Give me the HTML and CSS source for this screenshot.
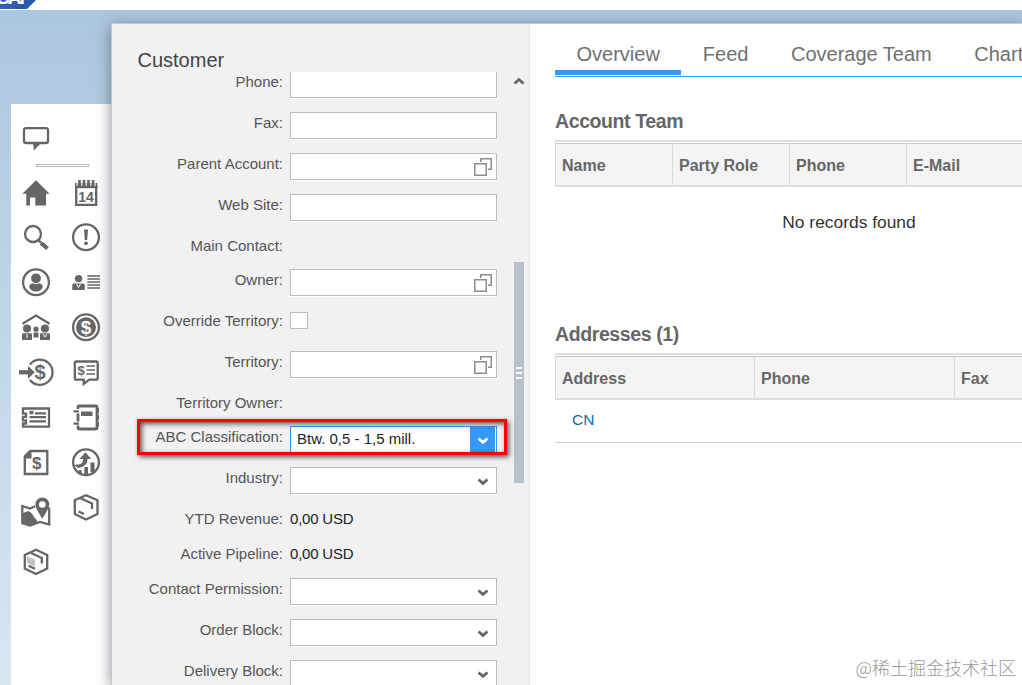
FILE: index.html
```html
<!DOCTYPE html>
<html lang="en">
<head>
    <meta charset="UTF-8" />
    <meta name="viewport" content="width=device-width, initial-scale=1.0" />
    <title>Customer</title>
    <link rel="stylesheet" href="styles.css">
</head>
<body>
    <header class="topbar"><div class="logo"><span>SAP</span></div></header>

    <div class="stage">
        <nav class="rail">
            <div class="rail-top">
                <svg class="icon" viewBox="0 0 40 40"><path class="line" d="M10 10.2H30Q32 10.2 32 12V23Q32 25 30 25H10Q8 25 8 23V12Q8 10.2 10 10.2Z"/><path d="M17 25h8l-7 7.5z"/></svg>
            </div>
            <div class="rail-divider"></div>
            <div class="rail-columns">
                <div class="rail-column">
                    <!-- home -->
                    <svg class="icon" viewBox="0 0 40 40"><path d="M20 7.3L33.7 20.8H30V32.5H19.3V24.5H14V32.5H10.3V20.8H6.3Z"/></svg>
                    <!-- search -->
                    <svg class="icon" viewBox="0 0 40 40"><circle class="line" cx="17" cy="16" r="8"/><path class="line" d="M22 22l3 2.5"/><path class="line thick" d="M25 25l6.5 5.5"/></svg>
                    <!-- user -->
                    <svg class="icon" viewBox="0 0 40 40"><circle class="line" cx="20" cy="19.3" r="12.9"/><circle cx="20" cy="15.3" r="4.9"/><path d="M13.2 24.2Q13.2 20.7 17 20.3Q20 22 23 20.3Q26.8 20.7 26.8 24.2Q25 28.4 20 28.4Q15 28.4 13.2 24.2Z"/></svg>
                    <!-- household -->
                    <svg class="icon" viewBox="0 0 40 40"><path class="line" d="M6.5 15.7L20 7.5L33.5 15.7"/><circle cx="11" cy="20.5" r="4"/><circle cx="29" cy="20.5" r="4"/><circle cx="20" cy="21.2" r="2.6"/><path d="M6 32V26.5Q6 25.2 7.5 25.2H14.5Q16 25.2 16 26.5V32ZM24 32V26.5Q24 25.2 25.5 25.2H32.5Q34 25.2 34 26.5V32ZM17.5 29.5V24.5H22.5V29.5Z"/><path class="cut" d="M11 26v4M27.2 26l1.8 3 1.8-3"/></svg>
                    <!-- sales -->
                    <svg class="icon" viewBox="0 0 40 40"><path class="line" d="M14 11.5A12.6 12.6 0 1 1 14 27"/><path class="line thick" d="M3 19.3h10"/><path d="M12 13l6.8 6.3L12 25.7z"/><text class="glyph" x="24" y="26.2" font-size="20">$</text></svg>
                    <!-- tickets -->
                    <svg class="icon" viewBox="0 0 40 40"><path class="line" d="M7 10.5H33V28.7H7V25.5h3v-3.2H7v-3.5h3v-3.2H7Z"/><path d="M13.5 12.8h4v3.5h-4z"/><path class="line" d="M19 15.3h11M13.5 19.2H30M13.5 23.4H30"/></svg>
                    <!-- quote -->
                    <svg class="icon" viewBox="0 0 40 40"><path class="line" d="M14 8H31.3V31H8.8V14"/><path d="M7.7 15.5v-2.8L13.5 6.9h2v8.6z"/><text class="glyph" x="20.7" y="26" font-size="17">$</text></svg>
                    <!-- visits -->
                    <svg class="icon icon-map" viewBox="0 0 40 40"><path class="line" d="M19 14.3L14 16.5L6.3 14V31.2L14 33.5L24 30L33.2 32.5V16.5L30 15.5"/><path d="M6.3 21.5L12 19Q16 20.5 18 25L21 28.5V31L14 33.8L6.3 31.2Z"/><path fill-rule="evenodd" d="M26.3 5.5A7 7 0 0 1 33.3 12.5Q33.3 16 26.3 26.7Q19.3 16 19.3 12.5A7 7 0 0 1 26.3 5.5ZM26.3 9.2A3.3 3.3 0 1 0 26.3 15.8A3.3 3.3 0 1 0 26.3 9.2Z"/></svg>
                    <!-- registered product -->
                    <svg class="icon" viewBox="0 0 40 40"><path class="line" d="M20 7.8L31.2 13V26.5L20 32L8.8 26.5V13Z"/><path class="line" d="M14.5 10.8L25.8 16V21.5"/><path class="bars" d="M12 14.5v7M14 15.4v7M16 16.3v7M18 17v7"/><path class="line" d="M12.5 23.8l6.5 3"/></svg>
                </div>
                <div class="rail-column">
                    <!-- calendar -->
                    <svg class="icon" viewBox="0 0 40 40"><path class="line" d="M10.2 13V31.9H30.2V13"/><path d="M9 10h22.4v5.2H9z"/><path class="pins" d="M13.5 7v5M18 7v5M22.5 7v5M27 7v5"/><path class="cut" d="M11.2 10v3M15.8 10v3M20.2 10v3M24.8 10v3M29.2 10v3"/><text class="glyph" x="20" y="28.8" font-size="14">14</text></svg>
                    <!-- alert -->
                    <svg class="icon" viewBox="0 0 40 40"><circle class="line" cx="20" cy="19.3" r="12.9"/><path d="M18 11.5h4L21.2 22h-2.4z"/><circle cx="20" cy="25.3" r="1.9"/></svg>
                    <!-- contacts -->
                    <svg class="icon" viewBox="0 0 40 40"><circle cx="12.6" cy="15.6" r="3.7"/><path d="M6.3 27V22.2Q6.3 20.6 8 20.6H17.2Q18.8 20.6 18.8 22.2V27Z"/><path class="cut" d="M10.5 21l2 3.5 2-3.5"/><path class="line fine" d="M21.3 13H34M21.3 16H34M21.3 19H34M21.3 22H34M21.3 25H34"/></svg>
                    <!-- money -->
                    <svg class="icon" viewBox="0 0 40 40"><circle class="line" cx="20" cy="19.3" r="12.9"/><circle cx="20" cy="19.3" r="10"/><text class="glyph light" x="20" y="26" font-size="19">$</text></svg>
                    <!-- sales message -->
                    <svg class="icon" viewBox="0 0 40 40"><path class="line" d="M10.5 8.5H30Q31.7 8.5 31.7 10.2V25Q31.7 26.7 30 26.7H23.3L17.7 31V26.7H10.5Q8.8 26.7 8.8 25V10.2Q8.8 8.5 10.5 8.5Z"/><text class="glyph" x="15" y="21.8" font-size="13">$</text><path class="line fine" d="M20.5 13H29M20.5 17H29M20.5 21H29"/></svg>
                    <!-- notebook -->
                    <svg class="icon" viewBox="0 0 40 40"><path class="line heavy" d="M12 11V9Q12 8 13.5 8H29.5Q31 8 31 9.5V29.5Q31 31 29.5 31H13.5Q12 31 12 29.5V27.5M12 15.5v8"/><path d="M31 10h2v4.5H31zM31 17h2v4.5H31zM31 24h2v4.5H31zM15 13.5h11.5v4.5H15z"/><path class="line" d="M7.5 13.3h5.5M7.5 25.7h5.5"/></svg>
                    <!-- forecast -->
                    <svg class="icon" viewBox="0 0 40 40"><circle class="line" cx="20" cy="19.3" r="12.9"/><path d="M13.5 16L19.5 9.3L25.2 16H21.5Q21.5 24 12 25L8 21.8Q17 22.5 17.2 16ZM12.5 27.2h3.2v4h-3.2zM18.3 24h3.7v8h-3.7zM24.5 19.5h4V29h-4z"/></svg>
                    <!-- product -->
                    <svg class="icon" viewBox="0 0 40 40"><path class="line" d="M20 7.3L31.5 12.3V26L20 31.5L8.8 26V12.3Z"/><path class="line" d="M14.5 10.2L26 15.5V21"/><path class="line" d="M12.5 23.5l5.5 2.5"/></svg>
                </div>
            </div>
        </nav>

        <div class="window">
            <aside class="panel">
                <h1 class="panel-title">Customer</h1>
                <div class="form-area">
                    <form class="form">
                        <div class="row"><label>Phone:</label><div class="field"></div></div>
                        <div class="row"><label>Fax:</label><div class="field"></div></div>
                        <div class="row"><label>Parent Account:</label><div class="field"><svg class="lookup" viewBox="0 0 18 18"><path d="M.75 5.75h11.5v11.5H.75zM6.75 4V.75h10.5v10.5H14"/></svg></div></div>
                        <div class="row"><label>Web Site:</label><div class="field"></div></div>
                        <div class="row row-empty"><label>Main Contact:</label></div>
                        <div class="row"><label>Owner:</label><div class="field"><svg class="lookup" viewBox="0 0 18 18"><path d="M.75 5.75h11.5v11.5H.75zM6.75 4V.75h10.5v10.5H14"/></svg></div></div>
                        <div class="row"><label>Override Territory:</label><span class="checkbox"></span></div>
                        <div class="row"><label>Territory:</label><div class="field"><svg class="lookup" viewBox="0 0 18 18"><path d="M.75 5.75h11.5v11.5H.75zM6.75 4V.75h10.5v10.5H14"/></svg></div></div>
                        <div class="row row-empty"><label>Territory Owner:</label></div>
                        <div class="row"><label>ABC Classification:</label><div class="field active"><span>Btw. 0,5 - 1,5 mill.</span><div class="dropdown"><svg class="chevron" viewBox="0 0 12 8"><path d="M1.5 1.5L6 5.4L10.5 1.5"/></svg></div></div><div class="highlight"></div></div>
                        <div class="row"><label>Industry:</label><div class="field"><svg class="chevron" viewBox="0 0 12 8"><path d="M1.5 1.5L6 5.4L10.5 1.5"/></svg></div></div>
                        <div class="row row-text"><label>YTD Revenue:</label><span class="value">0,00 USD</span></div>
                        <div class="row row-text"><label>Active Pipeline:</label><span class="value">0,00 USD</span></div>
                        <div class="row"><label>Contact Permission:</label><div class="field"><svg class="chevron" viewBox="0 0 12 8"><path d="M1.5 1.5L6 5.4L10.5 1.5"/></svg></div></div>
                        <div class="row"><label>Order Block:</label><div class="field"><svg class="chevron" viewBox="0 0 12 8"><path d="M1.5 1.5L6 5.4L10.5 1.5"/></svg></div></div>
                        <div class="row"><label>Delivery Block:</label><div class="field"><svg class="chevron" viewBox="0 0 12 8"><path d="M1.5 1.5L6 5.4L10.5 1.5"/></svg></div></div>
                    </form>
                    <div class="scrollbar">
                        <svg class="chevron up" viewBox="0 0 12 8"><path d="M1.5 6.5L6 2.5L10.5 6.5"/></svg>
                        <div class="thumb"><i></i><i></i><i></i></div>
                    </div>
                </div>
            </aside>

            <main class="content">
                <div class="tabs">
                    <div class="tab selected">Overview</div>
                    <div class="tab">Feed</div>
                    <div class="tab">Coverage Team</div>
                    <div class="tab">Chart</div>
                </div>
                <section>
                    <h2>Account Team</h2>
                    <div class="table-head">
                        <div>Name</div><div>Party Role</div><div>Phone</div><div>E-Mail</div>
                    </div>
                    <p class="no-records">No records found</p>
                </section>
                <section>
                    <h2>Addresses (1)</h2>
                    <div class="table-head wide">
                        <div>Address</div><div>Phone</div><div>Fax</div>
                    </div>
                    <div class="table-row"><a>CN</a></div>
                </section>
            </main>
        </div>
    </div>
    <div class="watermark">@稀土掘金技术社区</div>
</body>
</html>
```
FILE: styles.css
```css
* {
    box-sizing: border-box;
}

body {
    margin: 0;
    height: 100vh;
    overflow: hidden;
    display: flex;
    flex-direction: column;
    font-family: "Liberation Sans", Arial, sans-serif;
    color: #555;
    background: #fff;
}

.topbar {
    height: 10px;
    flex: none;
    background: #fff;
}

.logo {
    width: 36px;
    height: 9px;
    overflow: hidden;
    display: flex;
    align-items: flex-end;
    background: linear-gradient(90deg, #3560b0, #2556a8);
    clip-path: polygon(0 0, 100% 0, 27px 100%, 0 100%);
}

.logo span {
    color: #fff;
    font-size: 19px;
    font-weight: bold;
    line-height: 18px;
    margin-bottom: 2px;
    margin-left: -3px;
    letter-spacing: -2px;
}

.stage {
    flex: 1;
    min-height: 0;
    display: flex;
    background: linear-gradient(#abc7df, #dae6f2);
}

/* icon rail */
.rail {
    width: 100px;
    flex: none;
    margin: 94px 0 0 11px;
    background: #fff;
}

.rail-top {
    height: 61px;
    padding: 14px 0 0 5px;
}

.rail-divider {
    width: 53px;
    height: 3px;
    margin: -1px 0 6px 25px;
    border: 1px solid #bbb;
}

.rail-columns {
    display: flex;
    margin-top: 4px;
}

.rail-column {
    display: flex;
    flex-direction: column;
    width: 50px;
    padding: 0 5px;
    gap: 5px;
}

.icon {
    display: block;
    width: 40px;
    height: 40px;
    fill: #666;
}

.icon-map {
    margin: 4px 0 5px;
}

.line {
    fill: none;
    stroke: #666;
    stroke-width: 2.3;
}

.heavy {
    stroke-width: 2.8;
}

.thick {
    stroke-width: 4.2;
}

.fine {
    stroke-width: 1.6;
}

.cut {
    fill: none;
    stroke: #fff;
    stroke-width: 1;
}

.pins {
    fill: none;
    stroke: #666;
    stroke-width: 2.6;
}

.bars {
    fill: none;
    stroke: #999;
    stroke-width: 1.2;
}

.glyph {
    font-weight: bold;
    text-anchor: middle;
}

.light {
    fill: #fff;
}

/* customer window */
.window {
    flex: 1;
    min-width: 0;
    display: flex;
    margin-top: 13px;
    border: solid #c8c8c8;
    border-width: 1px 0 0 1px;
    box-shadow: 0 3px 14px rgba(50, 60, 75, .55);
}

.panel {
    width: 418px;
    flex: none;
    display: flex;
    flex-direction: column;
    background: #f1f1f1;
    border-right: 1px solid #e6e6e6;
}

.panel-title {
    margin: 0;
    height: 48px;
    flex: none;
    padding: 24px 0 0 25.5px;
    font-size: 20px;
    font-weight: normal;
    line-height: 24px;
    color: #444;
}

.form-area {
    flex: 1;
    min-height: 0;
    display: flex;
    overflow: hidden;
}

.form {
    width: 402px;
    margin-top: -1px;
}

.row {
    position: relative;
    height: 41px;
    display: flex;
    align-items: flex-start;
    font-size: 15px;
    line-height: 22px;
}

.row-empty {
    height: 34px;
}

.row-text {
    height: 35px;
}

.row label {
    width: 171px;
    margin-right: 7px;
    text-align: right;
}

.field {
    width: 207px;
    height: 27px;
    display: flex;
    align-items: center;
    justify-content: flex-end;
    padding-right: 4px;
    background: #fff;
    border: 1px solid #bcbcbc;
    box-shadow: 0 1px 0 #fff;
}

.field.active {
    justify-content: space-between;
    padding: 0 0 0 6px;
    color: #222;
    border-color: #3399ff;
}

.field.active span {
    margin-top: -2px;
}

.dropdown {
    width: 26px;
    height: 25px;
    display: flex;
    align-items: center;
    justify-content: center;
    background: #3399ff;
    border-right: 1px solid #fff;
}

.lookup {
    width: 18px;
    height: 18px;
    fill: none;
    stroke: #8c8c8c;
    stroke-width: 1.5;
}

.chevron {
    width: 12px;
    height: 8px;
    margin: 3px 3px 0 0;
    fill: none;
    stroke: #666;
    stroke-width: 2.8;
}

.dropdown .chevron {
    margin: 3px 0 0;
    stroke: #fff;
}

.checkbox {
    width: 18px;
    height: 17px;
    margin-top: 2px;
    background: #fff;
    border: 1px solid #bcbcbc;
}

.value {
    color: #222;
    letter-spacing: -.2px;
}

.highlight {
    position: absolute;
    left: 25px;
    top: -7px;
    width: 370px;
    height: 36px;
    border: 3px solid #f00;
    box-shadow: 2px 2px 5px rgba(0, 0, 0, .65), inset 2px 2px 5px rgba(0, 0, 0, .65);
}

.scrollbar {
    width: 10px;
    display: flex;
    flex-direction: column;
    align-items: center;
}

.chevron.up {
    flex: none;
    margin: 5px 0 0;
}

.thumb {
    width: 10px;
    height: 221px;
    flex: none;
    margin-top: 177px;
    display: flex;
    flex-direction: column;
    align-items: center;
    justify-content: center;
    gap: 3px;
    background: #b6c1cc;
}

.thumb i {
    width: 6px;
    height: 2px;
    background: #fff;
}

/* right side */
.content {
    flex: 1;
    min-width: 0;
    padding: 6px 0 0 25px;
    overflow: hidden;
    background: #fff;
}

.tabs {
    height: 47px;
    display: flex;
    border-bottom: 1px solid #3399ff;
}

.tab {
    height: 45px;
    flex: none;
    padding: 12px 0 0 21.5px;
    margin-right: 21px;
    font-size: 20px;
    line-height: 24px;
    color: #707070;
}

.tab.selected {
    padding-right: 21.5px;
    margin-right: 0;
    border-bottom: 5px solid #3399ff;
}

section {
    height: 213px;
    padding-top: 32px;
}

h2 {
    margin: 0;
    height: 31px;
    font-size: 19.5px;
    letter-spacing: -.4px;
    line-height: 25px;
    color: #666;
}

.table-head {
    display: flex;
    width: 700px;
    height: 47px;
    padding-top: 1px;
    border-top: 2px solid #ddd;
    border-bottom: 2px solid #ddd;
}

.table-head div {
    width: 117px;
    flex: none;
    padding-left: 6px;
    font-size: 16px;
    font-weight: bold;
    line-height: 43px;
    color: #666;
    background: #f4f4f4;
    border-top: 1px solid #c8c8c8;
    border-left: 1px solid #d8d8d8;
}

.table-head.wide div {
    width: 200px;
}

.table-head.wide div:first-child {
    width: 199px;
}

.no-records {
    width: 588px;
    margin: 23px 0 0;
    text-align: center;
    font-size: 17.4px;
    line-height: 24px;
    color: #333;
}

.table-row {
    height: 43px;
    padding-left: 17px;
    border-bottom: 1px solid #ccc;
    font-size: 15.5px;
    line-height: 40px;
}

.table-row a {
    color: #0a6fa8;
}

.watermark {
    position: absolute;
    right: 6px;
    bottom: 5px;
    font-family: "Noto Sans CJK SC", sans-serif;
    font-size: 18px;
    font-weight: 300;
    line-height: 26px;
    color: #999;
}
```
